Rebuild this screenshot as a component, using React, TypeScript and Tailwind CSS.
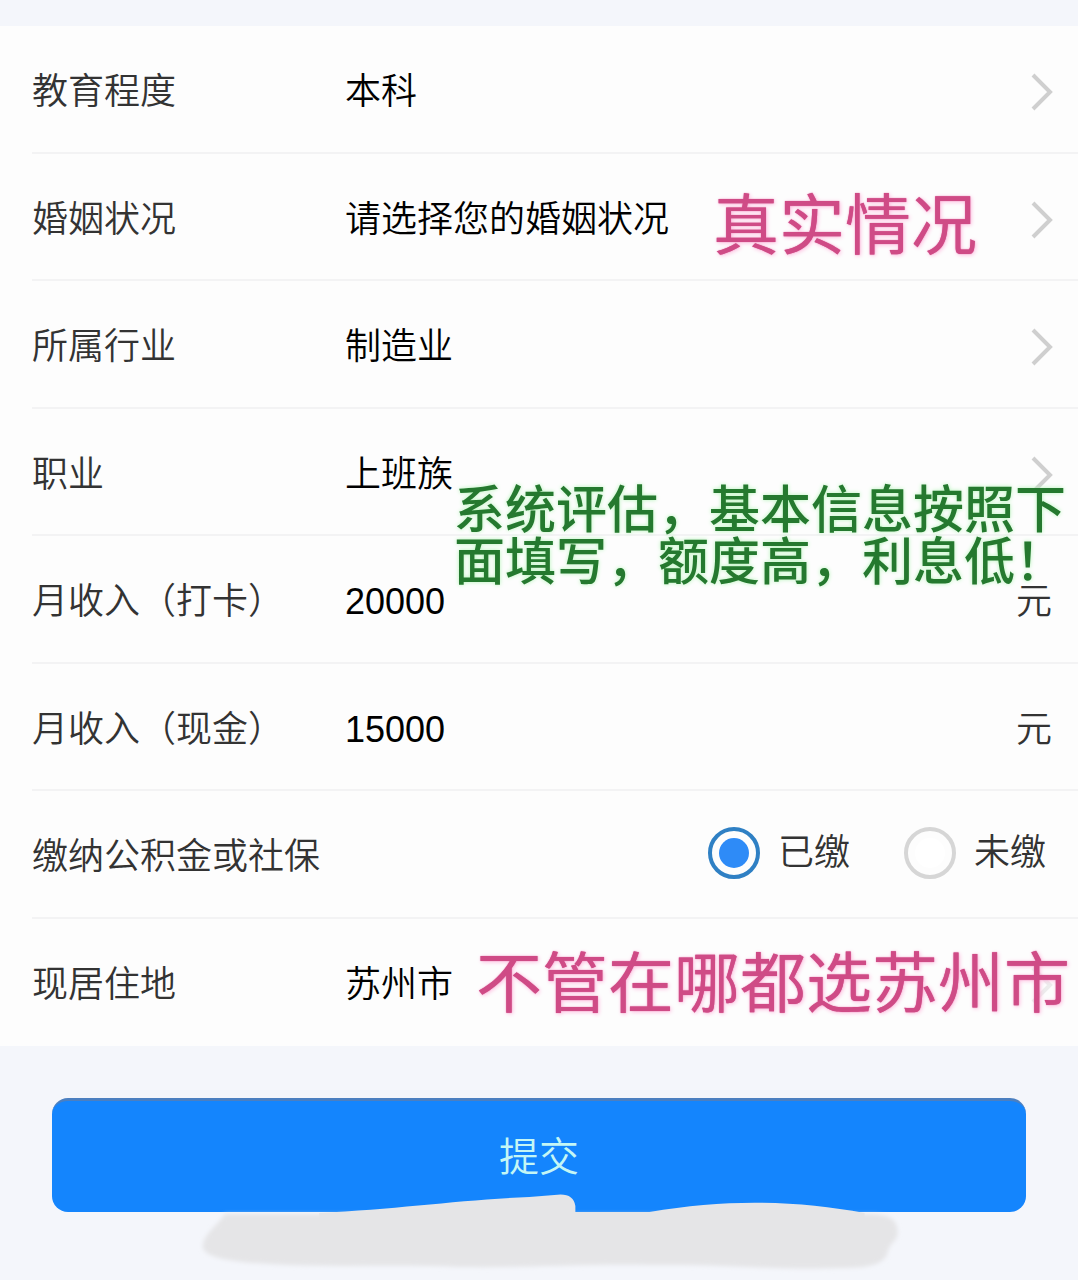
import { useState, type ReactNode } from "react";

function Chevron({ faint = false }: { faint?: boolean }) {
  return (
    <svg
      className="pointer-events-none h-10 w-6 shrink-0"
      viewBox="0 0 24 40"
      fill="none"
      stroke={faint ? "#ececec" : "#cfcfcf"}
      strokeWidth="4"
      aria-hidden="true"
    >
      <path d="M3 3 L20 20 L3 37" />
    </svg>
  );
}

function Row({ children, last = false }: { children: ReactNode; last?: boolean }) {
  return (
    <div className="relative pl-8 odd:h-32 even:h-[127px]">
      <div
        className={
          last
            ? "flex h-full items-center pt-1 pr-6"
            : "flex h-full items-center border-b-2 border-[#f3f3f4] pt-[6px] pr-6"
        }
      >
        {children}
      </div>
    </div>
  );
}

const labelClass = "w-[313px] shrink-0 whitespace-nowrap text-[#333333]";

function SelectRow({
  id,
  label,
  options,
  note,
  last = false,
}: {
  id: string;
  label: string;
  options: string[];
  note?: ReactNode;
  last?: boolean;
}) {
  return (
    <Row last={last}>
      <label htmlFor={id} className={labelClass}>
        {label}
      </label>
      <select
        id={id}
        className="min-w-0 flex-1 appearance-none bg-transparent text-black outline-none"
      >
        {options.map((o) => (
          <option key={o}>{o}</option>
        ))}
      </select>
      <Chevron faint={last} />
      {note}
    </Row>
  );
}

function AmountRow({ id, label, value }: { id: string; label: string; value: string }) {
  return (
    <Row>
      <label htmlFor={id} className={labelClass}>
        {label}
      </label>
      <input
        id={id}
        type="text"
        inputMode="numeric"
        defaultValue={value}
        className="min-w-0 flex-1 bg-transparent text-black outline-none"
      />
      <span className="pr-[2px] text-[#333333]">元</span>
    </Row>
  );
}

function RadioOption({
  label,
  checked,
  onSelect,
}: {
  label: string;
  checked: boolean;
  onSelect: () => void;
}) {
  return (
    <label className="flex items-center gap-[18px] text-[#333333]">
      <input
        type="radio"
        name="fund"
        checked={checked}
        onChange={onSelect}
        className="size-[52px] appearance-none rounded-full border-4 border-[#d6d6d6] bg-white bg-clip-content p-[7px] checked:border-[#2f80c4] checked:bg-[#2e8bf7]"
      />
      {label}
    </label>
  );
}

const pinkNote =
  "pointer-events-none absolute z-10 whitespace-nowrap text-[66px] leading-none font-normal text-[#cf4b86] [text-shadow:0_0_1px_#cf4b86,1px_1px_4px_#ffb8de]";

export default function App() {
  const [paid, setPaid] = useState(true);

  return (
    <main
      lang="zh-CN"
      className="min-h-screen overflow-hidden bg-[#f4f6fb] pt-[26px] font-['Liberation_Sans','Noto_Sans_CJK_SC',sans-serif] text-[36px] leading-[52px] font-[350]"
    >
      <form onSubmit={(e) => e.preventDefault()}>
        <div className="bg-[#fdfdfd]">
          <SelectRow id="education" label="教育程度" options={["本科"]} />
          <SelectRow
            id="marriage"
            label="婚姻状况"
            options={["请选择您的婚姻状况"]}
            note={<p className={`${pinkNote} top-[39px] right-[101px]`}>真实情况</p>}
          />
          <SelectRow id="industry" label="所属行业" options={["制造业"]} />
          <SelectRow
            id="job"
            label="职业"
            options={["上班族"]}
            note={
              <p className="pointer-events-none absolute top-[76px] right-3 z-10 text-[51px] leading-[52px] font-medium whitespace-nowrap text-[#25792f] [text-shadow:0_0_4px_#b4f5b8]">
                系统评估，基本信息按照下
                <br />
                面填写，额度高，利息低！
              </p>
            }
          />
          <AmountRow id="salary" label="月收入（打卡）" value="20000" />
          <AmountRow id="cash" label="月收入（现金）" value="15000" />
          <Row>
            <span id="fund-label" className="flex-1 whitespace-nowrap text-[#333333]">
              缴纳公积金或社保
            </span>
            <div
              role="radiogroup"
              aria-labelledby="fund-label"
              className="flex gap-[54px] pr-2 pb-2"
            >
              <RadioOption label="已缴" checked={paid} onSelect={() => setPaid(true)} />
              <RadioOption label="未缴" checked={!paid} onSelect={() => setPaid(false)} />
            </div>
          </Row>
          <SelectRow
            id="city"
            label="现居住地"
            options={["苏州市"]}
            last
            note={<p className={`${pinkNote} top-8 right-2`}>不管在哪都选苏州市</p>}
          />
        </div>

        <div className="relative px-[52px] pt-[52px] pb-[68px]">
          <button
            type="submit"
            className="h-[114px] w-full rounded-2xl border-t-3 border-[#4b7fc0] bg-[#1485fd] text-[40px] text-[#c4f6f5]"
          >
            提交
          </button>
          <svg
            className="pointer-events-none absolute bottom-2 left-[18.5%] h-[78px] w-[65%] overflow-visible"
            viewBox="0 0 700 78"
            preserveAspectRatio="none"
            fill="#e5e5e7"
            aria-hidden="true"
          >
            <defs>
              <filter id="soft" x="-5%" y="-20%" width="110%" height="140%">
                <feGaussianBlur stdDeviation="2" />
              </filter>
            </defs>
            <path
              filter="url(#soft)"
              d="M26 20 L670 20 C690 20 698 26 698 38 C698 48 690 48 688 58 C685 70 672 74 640 74 C570 76 530 70 450 71 C380 70 330 74 260 73 C200 70 130 74 70 70 C35 68 0 64 4 50 C7 38 16 34 26 20 Z"
            />
            <path d="M120 19 C200 15 260 6 330 3 L355 1 Q374 -2 376 12 L376 18 L450 18 C530 4 600 7 665 19 L665 26 L120 26 Z" />
          </svg>
        </div>
      </form>
    </main>
  );
}
